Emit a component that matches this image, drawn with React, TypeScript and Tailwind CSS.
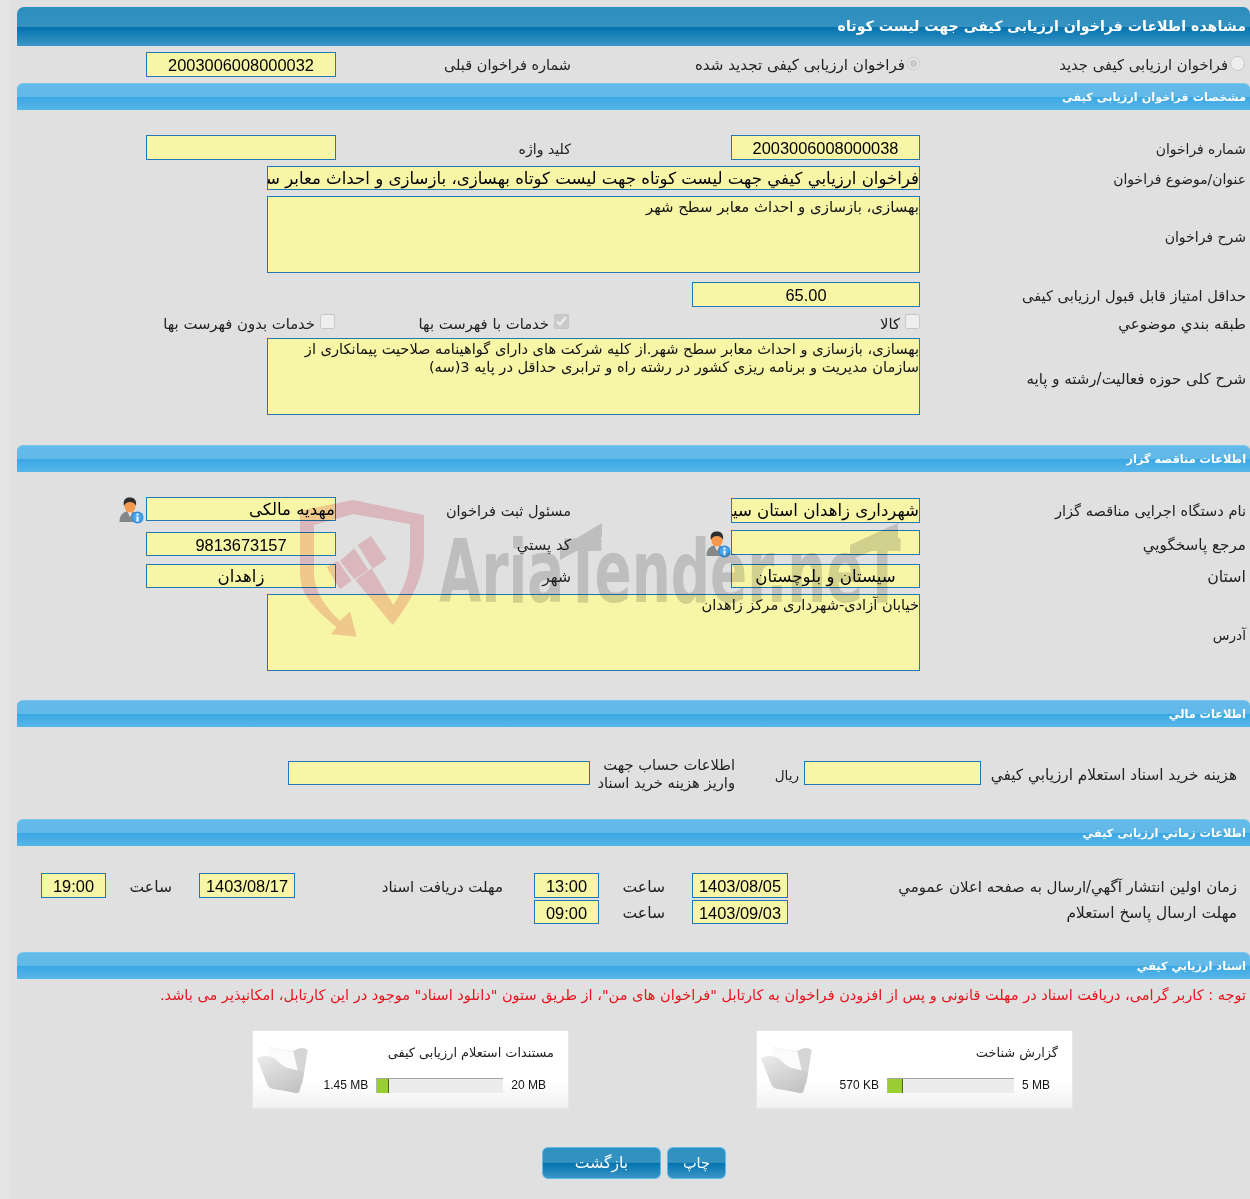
import type { ReactNode } from 'react';

const sans = "font-['DejaVu_Sans',sans-serif]";
const arial = "font-['Liberation_Sans','DejaVu_Sans',sans-serif]";
const btnBg = 'border border-[#5dbcec] rounded-[6px] h-[32px] pt-[2px] bg-[linear-gradient(#2e90c0_0%,#3592c1_48%,#0272ae_50%,#3c96c6_100%)]';

// size classes come in through cls, every box on this form has its own width
function Field({ cls, center, num, children }: { cls: string; center?: boolean; num?: boolean; children?: ReactNode }) {
  return (
    <div
      className={[
        'shrink-0 bg-[#f7f5a6] border border-[#2077b3] overflow-hidden whitespace-nowrap text-black leading-[24px]',
        center ? 'text-center' : 'text-right',
        num ? arial + ' text-[16.4px]' : sans + ' text-[16.6px]',
        cls,
      ].join(' ')}
    >
      {children}
    </div>
  );
}

function Area({ cls = 'text-[14.6px]', children }: { cls?: string; children?: ReactNode }) {
  return (
    <div className={'w-[653px] shrink-0 h-[77px] pt-[1px] bg-[#f7f5a6] border border-[#2077b3] leading-[18px] text-[#111] text-right ' + cls}>
      {children}
    </div>
  );
}

function Label({ cls, children }: { cls: string; children: ReactNode }) {
  return (
    <div className={'shrink-0 flex items-center pt-[4px] whitespace-nowrap text-[#222] ' + cls}>
      {children}
    </div>
  );
}

function Section({ cls, children }: { cls: string; children: string }) {
  return (
    <div className={'h-[27px] rounded-t-[6px] border-t border-[#78c6ee] bg-[linear-gradient(#64bbe9_0%,#62b9e8_48%,#3aa7e2_50%,#58b6e9_100%)] pr-[4px] pt-[5px] text-[11.3px] font-bold leading-[18px] text-white ' + cls}>
      {children}
    </div>
  );
}

function UserIcon() {
  return (
    <svg width="26" height="27" viewBox="0 0 26 27" className="shrink-0">
      <path d="M1.5 25 C1.5 18 5 15.5 8.5 14.5 L15 14.5 C19 15.5 21 18 21 25 Z" fill="#83888a" />
      <path d="M9.5 14.5 L12 20 L14.5 14.5 Z" fill="#e9e9e9" />
      <ellipse cx="12" cy="9" rx="5.6" ry="6.6" fill="#f5994f" />
      <path d="M6 9 C4.5 2 8.5 0.5 12 0.5 C16 0.5 19 3 18 9 C17 6 14.5 5 12 5 C9 5 7 6.5 6 9 Z" fill="#2d2d2d" />
      <circle cx="19.5" cy="20.5" r="6" fill="#2f8fe0" />
      <circle cx="19.5" cy="20.5" r="4.6" fill="#4ba6ee" />
      <rect x="18.5" y="19.5" width="2" height="5" fill="#fff" />
      <rect x="18.5" y="16.5" width="2" height="2" fill="#fff" />
    </svg>
  );
}

function Folder() {
  return (
    <svg width="56" height="50" viewBox="15 22 168 150" className="shrink-0">
      <defs>
        <linearGradient id="fold" x1="0" y1="0" x2="0.6" y2="1">
          <stop offset="0" stopColor="#ececec" />
          <stop offset="1" stopColor="#c4c4c4" />
        </linearGradient>
      </defs>
      <path d="M62 28 L130 42 C145 32 165 26 176 38 L160 140 L70 90 Z" fill="#d6d6d6" />
      <path d="M56 38 L62 28 L134 44 L146 98 L70 80 Z" fill="#fbfbfb" />
      <path d="M24 62 C40 52 62 54 76 62 C92 76 108 92 130 96 C142 98 156 96 166 104 L152 160 C150 168 140 168 130 164 L74 154 C64 152 58 148 54 138 Z" fill="url(#fold)" />
    </svg>
  );
}

function DocCard({ title, used, total, pct }: { title: string; used: string; total: string; pct: number }) {
  return (
    <div className="relative w-[317px] h-[79px] shrink-0 border border-[#e6e6e6] bg-[linear-gradient(#ffffff_0%,#ffffff_65%,#f1f1f1_100%)]">
      <div className="pt-[13px] pr-[14px] text-[12.9px] leading-[18px] text-[#222]">{title}</div>
      <div dir="ltr" className={arial + ' mt-[15px] flex justify-end items-center gap-[8px] pr-[22px] text-[12px] leading-[16px] text-[#111]'}>
        <span>{used}</span>
        <div className="w-[127px] h-[15px] bg-[#ececec] border-t border-[#a3a3a3]">
          <div style={{ width: `${pct}%` }} className="h-full bg-[#9acd32] border-r border-[#4f6420] border-l border-l-[#b5b5b5]" />
        </div>
        <span>{total}</span>
      </div>
      <div className="absolute left-[1px] top-[14px]">
        <Folder />
      </div>
    </div>
  );
}

function Watermark() {
  return (
    <div dir="ltr" className="absolute left-0 top-0 w-full h-full pointer-events-none mix-blend-multiply">
      <div className="absolute left-[290px] top-[490px]">
        <svg width="300" height="160" viewBox="0 0 900 480">
          <path
            fill="#f7d1d6"
            d="M30 62 L190 30 L402 75 L402 195 C398 275 355 345 308 405 L196 270 L245 235 L310 345 C340 300 360 250 360 195 L360 102 L190 72 L72 105 L72 255 C76 310 110 355 150 392 L180 365 L200 440 L122 432 L140 412 C80 360 32 320 30 255 Z"
          />
          <path fill="#f7d1d6" d="M203 165 L243 138 L290 207 L248 237 Z" />
          <path fill="#f7d1d6" d="M150 213 L193 175 L235 240 L193 268 Z" />
          <path fill="#f7d1d6" d="M110 232 L143 212 L185 272 L150 298 Z" />
        </svg>
      </div>
      <div className="absolute left-[430px] top-[510px]">
        <svg width="480" height="110" viewBox="0 0 480 110">
          <text x="9" y="92" fontFamily="DejaVu Sans" fontWeight="700" fontSize="88" fill="#d9d9d9" textLength="462" lengthAdjust="spacingAndGlyphs">
            AriaTender.neT
          </text>
          <path fill="#d9d9d9" d="M130 38 L172 13 L172 27 L130 50 Z" />
          <path fill="#d9d9d9" d="M420 35 L468 13 L468 30 L420 50 Z" />
        </svg>
      </div>
    </div>
  );
}

export default function App() {
  return (
    <div dir="rtl" className={sans + ' relative flex min-h-[1199px] bg-[#e0e0e0] overflow-hidden'}>
      <div className="flex-1 pt-[7px] ml-[7px]">
        <div className="h-[39px] rounded-t-[7px] bg-[linear-gradient(#2a8ebf_0%,#3592c1_50%,#0272ae_52%,#3c96c6_100%)] pr-[4px] pt-[8px] text-[14.2px] font-bold leading-[22px] text-white">
          مشاهده اطلاعات فراخوان ارزیابی کیفی جهت لیست کوتاه
        </div>

        <div className="flex h-[25px] mt-[6px]">
          <label className="w-[330px] shrink-0 flex items-start gap-[2px] pr-[5px] text-[14.8px] leading-[26px] text-[#222]">
            <input type="radio" disabled className="w-[15px] h-[15px] m-0 mt-[4px]" />
            فراخوان ارزیابی کیفی جدید
          </label>
          <label className="w-[189px] shrink-0 flex items-start gap-[2px] whitespace-nowrap text-[15.1px] leading-[26px] text-[#222]">
            <input type="radio" disabled defaultChecked className="w-[15px] h-[15px] m-0 mt-[4px]" />
            فراخوان ارزیابی کیفی تجدید شده
          </label>
          <Label cls="w-[395px] pr-[160px] text-[14.5px] -mt-px">شماره فراخوان قبلی</Label>
          <Field cls="w-[190px] h-[25px]" num center>2003006008000032</Field>
        </div>

        <Section cls="mt-[6px]">مشخصات فراخوان ارزیابی کیفی</Section>

        <div className="flex h-[25px] mt-[25px]">
          <Label cls="w-[330px] pr-[4px] text-[13.9px]">شماره فراخوان</Label>
          <Field cls="w-[189px] h-[25px]" num center>2003006008000038</Field>
          <Label cls="w-[395px] pr-[160px] text-[14.1px]">کلید واژه</Label>
          <Field cls="w-[190px] h-[25px]" />
        </div>
        <div className="flex h-[24px] mt-[6px]">
          <Label cls="w-[330px] pr-[4px] text-[13.9px] -mt-px">عنوان/موضوع فراخوان</Label>
          <Field cls="w-[653px] h-[24px]">فراخوان ارزیابي کیفي جهت لیست کوتاه جهت لیست کوتاه بهسازی، بازسازی و احداث معابر سطح شهر</Field>
        </div>
        <div className="flex h-[77px] mt-[6px]">
          <Label cls="w-[330px] pr-[4px] text-[14px] mt-px">شرح فراخوان</Label>
          <Area cls="text-[14.9px]">بهسازی، بازسازی و احداث معابر سطح شهر</Area>
        </div>
        <div className="flex h-[25px] mt-[9px]">
          <Label cls="w-[330px] pr-[4px] text-[14.6px] -mt-px">حداقل امتیاز قابل قبول ارزیابی کیفی</Label>
          <Field cls="w-[228px] h-[25px]" num center>65.00</Field>
        </div>
        <div className="flex h-[20px] mt-[6px] text-[14.8px] text-[#222]">
          <Label cls="w-[330px] pr-[4px] text-[15px] -mt-[2px]">طبقه بندي موضوعي</Label>
          <label className="w-[351px] shrink-0 flex items-start gap-[5px] leading-[22px]">
            <input type="checkbox" disabled className="w-[15px] h-[15px] m-0 mt-[1px]" />
            کالا
          </label>
          <label className="w-[234px] shrink-0 flex items-start gap-[5px] leading-[22px]">
            <input type="checkbox" disabled defaultChecked className="w-[15px] h-[15px] m-0 mt-[1px]" />
            خدمات با فهرست بها
          </label>
          <label className="flex items-start gap-[5px] leading-[22px]">
            <input type="checkbox" disabled className="w-[15px] h-[15px] m-0 mt-[1px]" />
            خدمات بدون فهرست بها
          </label>
        </div>
        <div className="flex h-[77px] mt-[5px]">
          <Label cls="w-[330px] pr-[4px] text-[15px] mt-px">شرح کلی حوزه فعالیت/رشته و پایه</Label>
          <Area>
            بهسازی، بازسازی و احداث معابر سطح شهر.از کلیه شرکت های دارای گواهینامه صلاحیت پیمانکاری از سازمان مدیریت و برنامه ریزی کشور در رشته راه و ترابری حداقل در پایه 3(سه)
          </Area>
        </div>

        <Section cls="mt-[30px]">اطلاعات مناقصه گزار</Section>

        <div className="flex items-start h-[25px] mt-[26px]">
          <Label cls="w-[330px] pr-[4px] text-[14.6px] leading-[22px] -mt-[2px]">نام دستگاه اجرایی مناقصه گزار</Label>
          <Field cls="w-[189px] h-[25px]">شهرداری زاهدان استان سیستان و بلوچستان</Field>
          <Label cls="w-[395px] pr-[160px] text-[14.5px] leading-[22px] -mt-[2px]">مسئول ثبت فراخوان</Label>
          <div className="flex items-start gap-[2px] -mt-px">
            <Field cls="w-[190px] h-[24px]">مهدیه مالکی</Field>
            <UserIcon />
          </div>
        </div>
        <div className="flex items-start h-[25px] mt-[7px]">
          <Label cls="w-[330px] pr-[4px] text-[15.2px] leading-[22px]">مرجع پاسخگویي</Label>
          <Field cls="w-[189px] h-[25px]" />
          <div className="w-[395px] shrink-0 flex items-start">
            <div className="mt-[1px]"><UserIcon /></div>
            <div className="w-[369px] pr-[134px] pt-[4px] text-[15px] leading-[22px] text-[#222] whitespace-nowrap">كد پستي</div>
          </div>
          <div className="mt-[2px]"><Field cls="w-[190px] h-[24px]" num center>9813673157</Field></div>
        </div>
        <div className="flex items-start h-[24px] mt-[9px]">
          <Label cls="w-[330px] pr-[4px] text-[15.8px] leading-[20px] -mt-px">استان</Label>
          <Field cls="w-[189px] h-[24px]" center>سیستان و بلوچستان</Field>
          <Label cls="w-[395px] pr-[160px] text-[15.6px] leading-[20px] -mt-px">شهر</Label>
          <Field cls="w-[190px] h-[24px]" center>زاهدان</Field>
        </div>
        <div className="flex h-[77px] mt-[6px]">
          <Label cls="w-[330px] pr-[4px] text-[13.7px] mt-px">آدرس</Label>
          <Area>خیابان آزادی-شهرداری مرکز زاهدان</Area>
        </div>

        <Section cls="mt-[29px]">اطلاعات مالي</Section>

        <div className="flex h-[24px] mt-[34px]">
          <Label cls="w-[269px] pr-[13px] text-[15.3px]">هزینه خرید اسناد استعلام ارزیابي کیفي</Label>
          <Field cls="w-[177px] h-[24px]" />
          <Label cls="w-[69px] pr-[5px] text-[13.6px]">ریال</Label>
          <div className="w-[145px] shrink-0 -mt-[5px] text-[14.7px] leading-[18px] text-[#222] whitespace-nowrap">
            اطلاعات حساب جهت
            <br />
            واریز هزینه خرید اسناد
          </div>
          <Field cls="w-[302px] h-[24px]" />
        </div>

        <Section cls="mt-[34px]">اطلاعات زماني ارزیابی کیفي</Section>

        <div className="flex h-[25px] mt-[27px]">
          <Label cls="w-[462px] pr-[13px] text-[15px]">زمان اولین انتشار آگهي/ارسال به صفحه اعلان عمومي</Label>
          <Field cls="w-[96px] h-[25px]" num center>1403/08/05</Field>
          <Label cls="w-[93px] pr-[27px] text-[15.6px]">ساعت</Label>
          <Field cls="w-[65px] h-[25px]" num center>13:00</Field>
          <Label cls="w-[239px] pr-[31px] text-[15px]">مهلت دریافت اسناد</Label>
          <Field cls="w-[96px] h-[25px]" num center>1403/08/17</Field>
          <Label cls="w-[93px] pr-[27px] text-[15.6px]">ساعت</Label>
          <Field cls="w-[65px] h-[25px]" num center>19:00</Field>
        </div>
        <div className="flex h-[24px] mt-[2px]">
          <Label cls="w-[462px] pr-[13px] text-[15.4px]">مهلت ارسال پاسخ استعلام</Label>
          <Field cls="w-[96px] h-[24px]" num center>1403/09/03</Field>
          <Label cls="w-[93px] pr-[27px] text-[15.6px]">ساعت</Label>
          <Field cls="w-[65px] h-[24px]" num center>09:00</Field>
        </div>

        <Section cls="mt-[28px]">اسناد ارزیابي کیفي</Section>

        <div className="mt-[6px] pr-[4px] text-[14.52px] leading-[20px] text-[#e8131b] whitespace-nowrap">
          توجه : کاربر گرامی، دریافت اسناد در مهلت قانونی و پس از افزودن فراخوان به کارتابل "فراخوان های من"، از طریق ستون "دانلود اسناد" موجود در این کارتابل، امکانپذیر می باشد.
        </div>

        <div className="flex gap-[187px] mt-[25px] pr-[177px]">
          <DocCard title="گزارش شناخت" used="570 KB" total="5 MB" pct={13} />
          <DocCard title="مستندات استعلام ارزیابی کیفی" used="1.45 MB" total="20 MB" pct={10} />
        </div>

        <div className="flex gap-[6px] mt-[38px] pr-[524px] text-white">
          <button className={'w-[59px] text-[14.5px] ' + btnBg}>چاپ</button>
          <button className={'w-[119px] text-[15.6px] ' + btnBg}>بازگشت</button>
        </div>
      </div>
      <div className="w-[10px] shrink-0 bg-[#e5e5e5]" />
      <Watermark />
    </div>
  );
}
